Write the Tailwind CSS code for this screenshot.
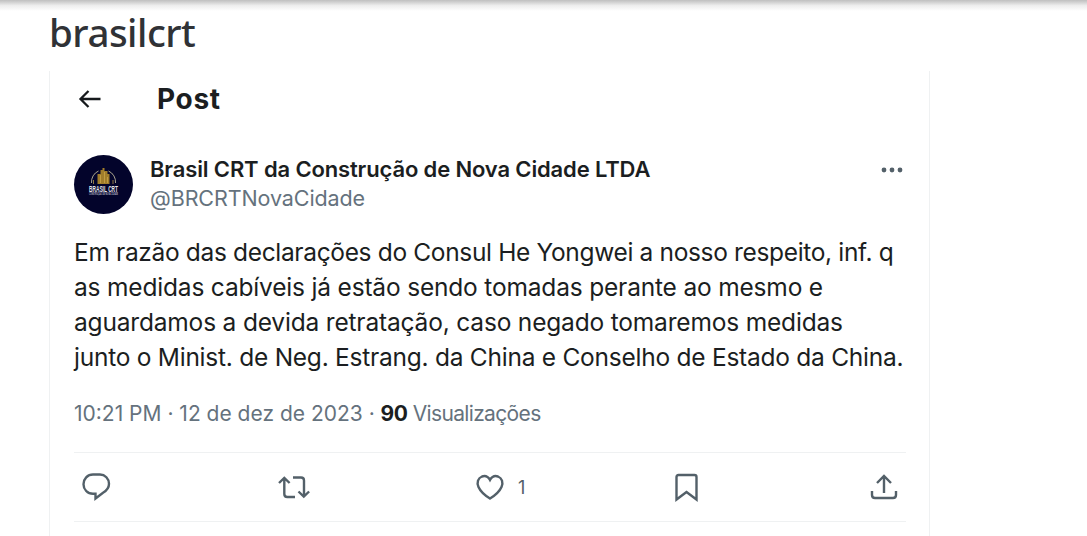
<!DOCTYPE html>
<html lang="pt-BR">
<head>
  <meta charset="UTF-8">
  <meta name="viewport" content="width=device-width, initial-scale=1.0">
  <title>brasilcrt</title>
  <script src="https://cdn.jsdelivr.net/npm/@tailwindcss/browser@4"></script>
</head>
<body class="bg-white h-[536px] overflow-hidden font-['Inter',sans-serif] text-[#1b1e21]">
  <!-- Sombra da barra superior -->
  <div class="h-[11px] bg-linear-to-b from-[#bfbfbf] via-[#ededed] to-white"></div>
  <h1 class="ml-[49px] h-[60px] text-[38.5px] leading-[42px] font-medium tracking-[-0.5px] text-[#303236] font-['Noto_Sans',sans-serif]">brasilcrt</h1>

  <article class="ml-[49px] w-[881px] h-[480px] border-x border-[#eff1f2] pl-[24px] pr-[23px]">
    <header class="flex items-center h-[56px] pl-[4px]">
      <svg class="w-[24px] h-[20px]" viewBox="0 0 24 20" fill="none" stroke="#16191c" stroke-width="2.3"><path d="M10.5 2 2.5 10l8 8M2.5 10H22.5"/></svg>
      <h2 class="ml-[55px] text-[28px] leading-[36px] font-bold tracking-[0.7px]">Post</h2>
    </header>

    <div class="flex mt-[27px] h-[60px]">
      <svg class="-ml-px w-[60px] h-[60px] shrink-0" viewBox="0 0 60 60">
        <circle cx="30.5" cy="30.5" r="29.5" fill="#03042b"/>
        <path d="M18.5 29a12 12 0 0 1 7-12M42.5 29a12 12 0 0 0-7-12" fill="none" stroke="#aaa58f" stroke-width="1"/>
        <path d="M24.5 30V20h3v-4h2v-2h2v3h3v3h2v10z" fill="#a17d2a"/>
        <path d="M27.5 21v8M31.5 18v11M34.5 23v6M20.5 30v-4M40 30v-4" stroke="#d0aa4e" stroke-width="0.7"/>
        <text x="16" y="38" font-family="Liberation Sans" font-size="9.5" font-weight="700" fill="#e4e4ea" textLength="29" lengthAdjust="spacingAndGlyphs">BRASIL CRT</text>
        <text x="16" y="41.3" font-family="Liberation Sans" font-size="2.9" font-weight="700" fill="#b9b9c6" textLength="29" lengthAdjust="spacingAndGlyphs">CONSTRUÇÃO DE NOVA CIDADE</text>
      </svg>
      <div class="ml-[17px] pt-px whitespace-nowrap">
        <div class="text-[22px] leading-[29px] font-semibold tracking-[-0.14px]">Brasil CRT da Construção de Nova Cidade LTDA</div>
        <div class="text-[21.5px] leading-[29px] tracking-[-0.1px] text-[#65727d]">@BRCRTNovaCidade</div>
      </div>
      <svg class="ml-auto mr-[2px] mt-[11px] w-[24px] h-[10px]" viewBox="0 0 24 10" fill="#536069"><circle cx="4" cy="5" r="2.4"/><circle cx="12" cy="5" r="2.4"/><circle cx="20" cy="5" r="2.4"/></svg>
    </div>

    <div class="mt-[21px] text-[24.5px] leading-[35px] whitespace-nowrap">
      <div class="tracking-[-0.34px]">Em razão das declarações do Consul He Yongwei a nosso respeito, inf. q</div>
      <div class="tracking-[-0.18px]">as medidas cabíveis já estão sendo tomadas perante ao mesmo e</div>
      <div class="tracking-[-0.18px]">aguardamos a devida retratação, caso negado tomaremos medidas</div>
      <div class="tracking-[-0.25px]">junto o Minist. de Neg. Estrang. da China e Conselho de Estado da China.</div>
    </div>

    <div class="mt-[24px] text-[21px] leading-[29px] text-[#65727d] whitespace-nowrap">10:21 PM · 12 de dez de 2023 · <b class="font-bold text-[#1b1e21] tracking-[-0.5px]">90</b><span class="tracking-[-0.65px]"> Visualizações</span></div>

    <!-- Acoes -->
    <div class="mt-[24px] h-[70px] border-y border-[#eff1f2] flex items-center pl-[6px] text-[#536069]">
      <div class="w-[197px] shrink-0">
        <svg class="w-[32px] h-[32px]" viewBox="0 0 32 32" fill="none" stroke="currentColor" stroke-width="2.4"><path d="M13 3.500h7c5 0 9 4.200 9 9.300 0 4-2.500 7-6 9L15.500 27.500v-4.700H13C7.500 22.800 3.500 18.500 3.500 13.200S7.500 3.500 13 3.500z"/></svg>
      </div>
      <div class="w-[197px] shrink-0">
        <svg class="w-[34px] h-[32px]" viewBox="0 0 34 32" fill="none" stroke="currentColor" stroke-width="2.4"><path d="M2 12 7.300 7l5.300 5M7.300 7.500V23q0 3 3 3H18M16 6.500h8q3 0 3 3V25M21.500 20.500l5.300 5 5.300-5"/></svg>
      </div>
      <div class="w-[196px] shrink-0 flex items-center">
        <svg class="w-[32px] h-[32px]" viewBox="0 0 32 32" fill="none" stroke="currentColor" stroke-width="2.4"><path d="M16 9C14 5.500 11 4.500 8 5.500c-4 1.500-5.500 6-3.500 10.500C6.500 20.500 11 24.500 16 27.500c5-3 9.500-7 11.500-11.500 2-4.500.5-9-3.500-10.500-3-1-6 0-8 3.500z"/></svg>
        <span class="ml-[12px] pt-px text-[18px]">1</span>
      </div>
      <div class="w-[199px] shrink-0">
        <svg class="w-[32px] h-[32px]" viewBox="0 0 32 32" fill="none" stroke="currentColor" stroke-width="2.4"><path d="M6.500 28.500V6q0-2 2-2h16q2 0 2 2v22.500l-10-7.500z"/></svg>
      </div>
      <svg class="w-[30px] h-[32px] shrink-0" viewBox="0 0 30 32" fill="none" stroke="currentColor" stroke-width="2.4"><path d="M15 22V5M8 12l7-7 7 7M3 20v4q0 3 3 3h18q3 0 3-3v-4"/></svg>
    </div>
  </article>
</body>
</html>
